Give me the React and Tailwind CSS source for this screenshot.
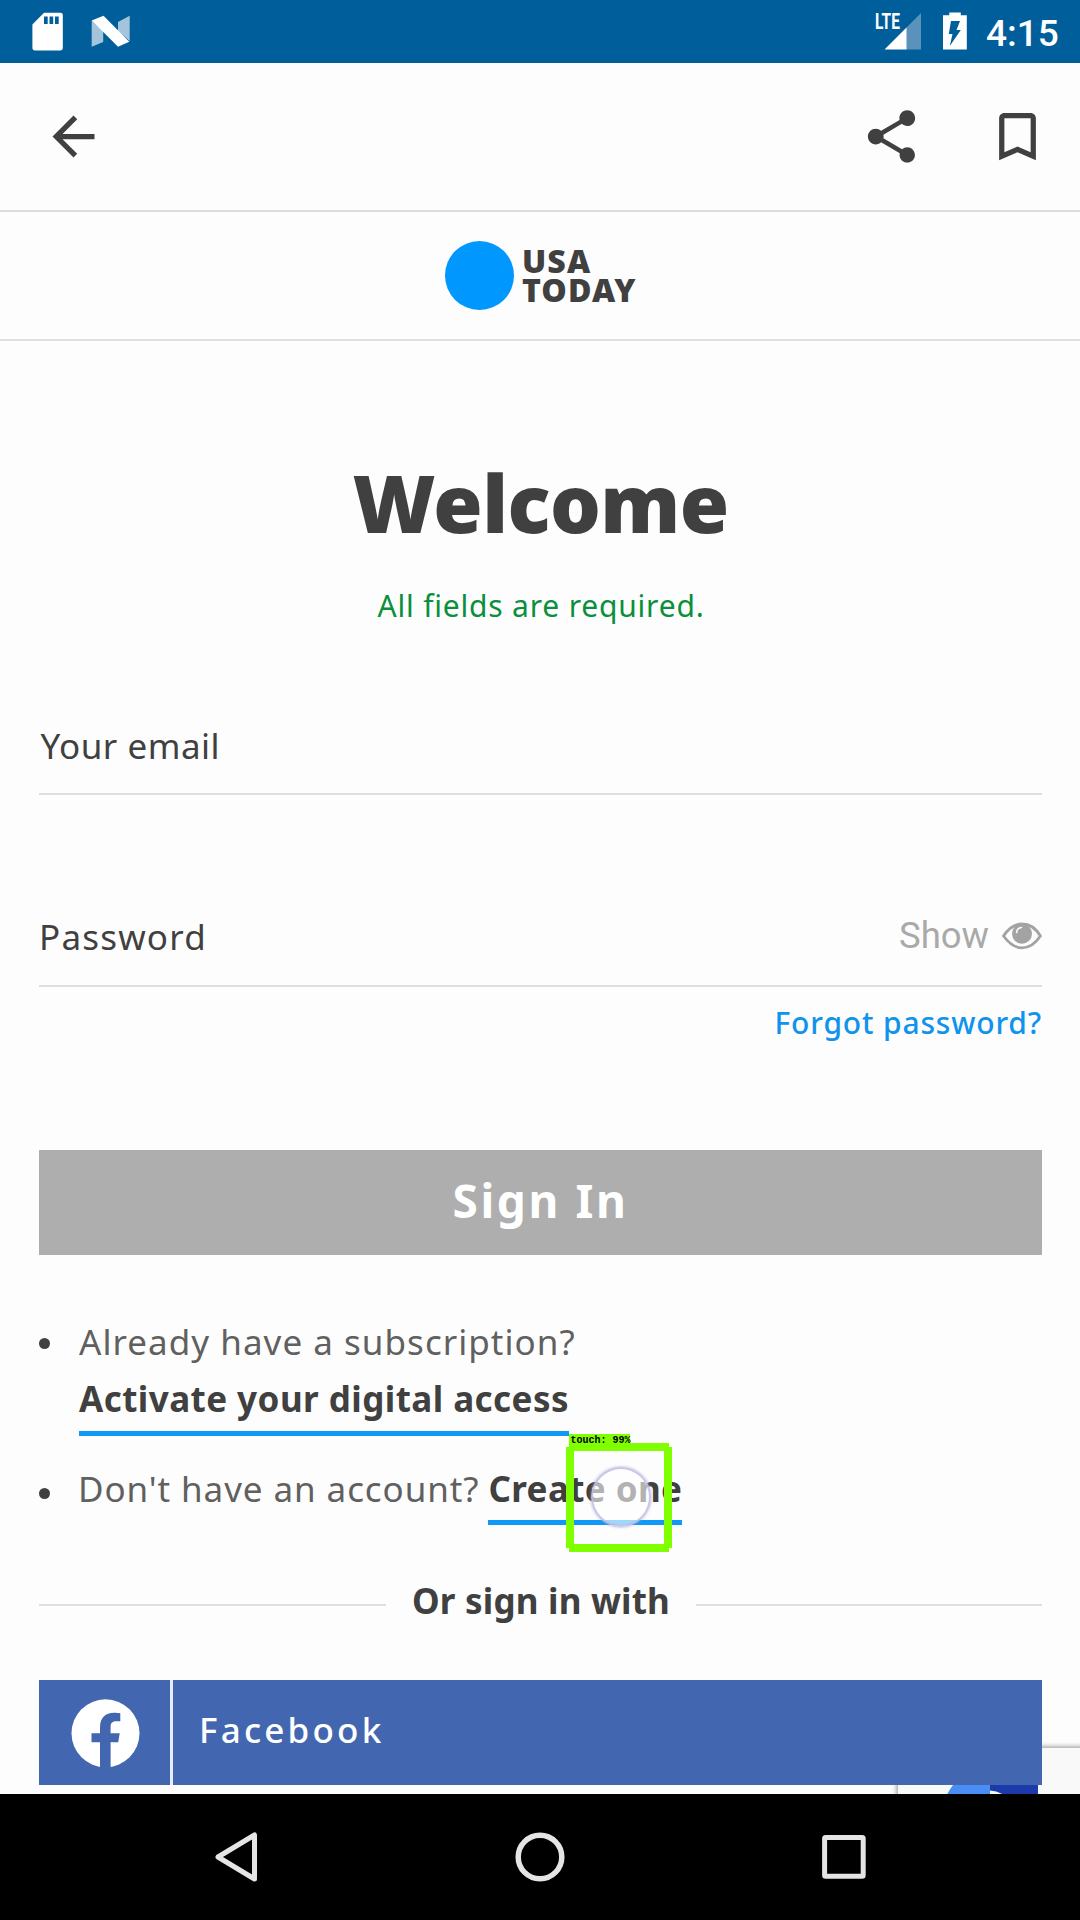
function StatusBar() {
  return (
    <div className="flex h-[63px] items-start bg-[#005e9b]">
      <svg className="ml-[32px] mt-[12px] h-[39px] w-[32px]" viewBox="0 0 32 39">
        <path fill="#fff" d="M12 .7H28.5A2.3 2.3 0 0 1 30.8 3V36A2.3 2.3 0 0 1 28.5 38.4H2.7A2.3 2.3 0 0 1 .4 36V12.5Z" />
        <path fill="#005e9b" d="M12 4.5h3.7v7.5H12zM17.5 4.5h3.7v7.5h-3.7zM23 4.5h3.7v7.5H23z" />
      </svg>
      <svg className="ml-[27px] mt-[15px] h-[33px] w-[40px]" viewBox="0 0 40 33">
        <path fill="#a3c5dc" d="M.7 5.5L12.2 16V27L.7 31.8ZM27 7L38.7.8V26L27 16Z" />
        <path fill="#fff" d="M.7 5.5L12.5.7L38.3 26.8L27 31.8Z" />
      </svg>
      <div className="relative ml-auto mt-[12px] h-[38px] w-[46px]">
        <svg className="h-[38px] w-[46px]" viewBox="0 0 46 38">
          <path fill="#5a92bb" d="M46 1V37.5H31V16Z" />
          <path fill="#fff" d="M31.5 15.5V37.5H9.5Z" />
        </svg>
        <span className="absolute left-0 -top-px origin-left scale-x-[0.7] font-['Roboto',sans-serif] text-[22px] leading-[22px] font-bold text-white">
          LTE
        </span>
      </div>
      <svg className="ml-[22px] mt-[12px] h-[38px] w-[24px]" viewBox="0 0 24 38">
        <path fill="#fff" d="M6.3.5H17.8V3.2H23.8V37.5H0V3.2H6.3Z" />
        <path fill="#005e9b" d="M8 9H17L13.5 18H17.8L6.8 34L9.5 22H5.8Z" />
      </svg>
      <span className="mt-[12px] ml-[19px] w-[94px] font-['Roboto',sans-serif] text-[37px] leading-[44px] font-medium text-white">
        4:15
      </span>
    </div>
  );
}

function Toolbar() {
  return (
    <div className="flex h-[149px] items-start border-b-2 border-[#dcdcdc] pt-[41.5px] text-[#404040]">
      <svg className="ml-[42px] h-[63px] w-[63px]" viewBox="0 0 24 24" fill="currentColor">
        <path d="M20 11H7.83l5.59-5.59L12 4l-8 8 8 8 1.41-1.41L7.83 13H20v-2z" />
      </svg>
      <svg className="ml-auto h-[63px] w-[63px]" viewBox="0 0 24 24" fill="currentColor">
        <path d="M18 16.08c-.76 0-1.44.3-1.96.77L8.91 12.7c.05-.23.09-.46.09-.7s-.04-.47-.09-.7l7.05-4.11c.54.5 1.25.81 2.04.81 1.66 0 3-1.34 3-3s-1.34-3-3-3-3 1.34-3 3c0 .24.04.47.09.7L8.04 9.81C7.5 9.31 6.79 9 6 9c-1.66 0-3 1.34-3 3s1.34 3 3 3c.79 0 1.5-.31 2.04-.81l7.12 4.16c-.05.21-.08.43-.08.65 0 1.61 1.31 2.92 2.92 2.92s2.92-1.31 2.92-2.92-1.31-2.92-2.92-2.92z" />
      </svg>
      <svg className="mr-[31.5px] ml-[63px] h-[63px] w-[63px]" viewBox="0 0 24 24" fill="currentColor">
        <path d="M17 3H7c-1.1 0-2 .9-2 2v16l7-3 7 3V5c0-1.1-.9-2-2-2zm0 15l-5-2.18L7 18V5h10v13z" />
      </svg>
    </div>
  );
}

function Brand() {
  return (
    <div className="flex h-[129px] border-b-2 border-[#dfdfdf]">
      <div className="mt-[29px] ml-[445px] size-[69px] rounded-full bg-[#0098ff]" />
      <div className="mt-[34px] ml-[8px] text-[32px] leading-[29px] font-black tracking-[1.1px]">
        <div>USA</div>
        <div>TODAY</div>
      </div>
    </div>
  );
}

function EyeIcon() {
  return (
    <svg className="ml-[13px] h-[28px] w-[40px]" viewBox="0 0 40 28">
      <path fill="none" stroke="#a3a3a3" strokeWidth="2.8" d="M1.5 14C7 5.5 13 2 20 2S33.500 5.5 38.4 14C33.5 21.5 27 25.8 20 25.8S7 21.5 1.5 14Z" />
      <circle cx="20" cy="11.8" r="10" fill="#a3a3a3" />
      <path fill="none" stroke="#fdfdfd" strokeWidth="1.6" strokeLinecap="round" d="M14.6 10.5C14.8 7.5 16.8 5.8 19.5 5.5" />
    </svg>
  );
}

function TouchMarker() {
  return (
    <div className="absolute top-[-29px] left-[78px] h-[119px] w-[108px]">
      <div className="absolute top-[37px] left-[25px] size-[60px] rounded-full border-2 border-[#b9b9e0]/80 bg-white/60 shadow-[0_0_2px_1px_rgba(160,160,215,0.45)]" />
      <div className="absolute top-[13px] left-[3px] h-[8px] w-[100px] bg-[#80ff00]" />
      <div className="absolute top-[114px] left-[3px] h-[8px] w-[100px] bg-[#80ff00]" />
      <div className="absolute top-[17px] left-0 h-[101px] w-[8px] bg-[#80ff00]" />
      <div className="absolute top-[17px] left-[98px] h-[101px] w-[8px] bg-[#80ff00]" />
      <div className="absolute top-[4px] left-[3px] h-[11px] w-[61px] bg-[#80ff00] pl-[1px] font-['Liberation_Mono',monospace] text-[10px] leading-[13px] font-bold tracking-normal whitespace-pre text-black">
        touch: 99%
      </div>
    </div>
  );
}

export default function App() {
  return (
    <div className="flex h-[1920px] w-[1080px] flex-col overflow-hidden bg-[#fdfdfd] font-['Noto_Sans',sans-serif] text-[#404040]">
      <StatusBar />
      <Toolbar />
      <Brand />
      <main className="relative h-[1453px] overflow-hidden pr-[38px] pl-[39px]">
        <h1 className="mt-[121px] text-center text-[80px] leading-[80px] font-black tracking-[-0.6px]">Welcome</h1>
        <p className="mt-[44px] pl-px text-center text-[30px] leading-[40px] font-[450] tracking-[0.8px] text-[#0a8f3c]">All fields are required.</p>

        <div className="mt-[95px] h-[74px] border-b-2 border-[#dfdfdf] pl-[1.5px] text-[35px] leading-[50px] font-[450] tracking-[0.5px]">
          Your email
        </div>
        <div className="mt-[116px] flex h-[76px] items-start border-b-2 border-[#dfdfdf]">
          <span className="mt-px text-[35px] leading-[50px] font-[450] tracking-[1.2px]">Password</span>
          <div className="ml-auto flex items-center">
            <span className="font-['Roboto',sans-serif] text-[36.5px] leading-[50px] text-[#a9a9a9]">Show</span>
            <EyeIcon />
          </div>
        </div>
        <p className="mt-[16px] text-right text-[30px] leading-[40px] font-medium tracking-[0.83px] text-[#0f93ec]">
          Forgot password?
        </p>

        <button className="mt-[107px] block h-[105px] w-[1003px] bg-[#aeaeae] pb-[5px] text-center text-[46px] leading-[98px] font-bold tracking-[2.6px] text-white">
          Sign In
        </button>

        <ul className="mt-[58px] text-[35px] text-[#606060]">
          <li className="flex">
            <span className="mt-[25px] mr-[29px] size-[11px] rounded-full bg-[#404040]" />
            <div>
              <div className="leading-[57px] font-[450] tracking-[1.03px]">Already have a subscription?</div>
              <a className="inline-block h-[66px] border-b-[5px] border-[#0f98f5] text-[35px] leading-[57px] font-bold tracking-[0.45px] text-[#404040]">
                Activate your digital access
              </a>
            </div>
          </li>
          <li className="mt-[23px] flex">
            <span className="mt-[29px] mr-[29px] size-[11px] rounded-full bg-[#404040]" />
            <div className="flex">
              <span className="-ml-px mr-[9px] leading-[60px] font-[450] tracking-[0.91px]">Don't have an account?</span>
              <span className="relative">
                <a className="inline-block h-[66px] border-b-[5px] border-[#0f98f5] leading-[60px] font-bold tracking-[0.4px] text-[#404040]">
                  Create one
                </a>
                <TouchMarker />
              </span>
            </div>
          </li>
        </ul>

        <div className="mt-[51px] flex items-center">
          <div className="mt-[7px] h-[2px] w-[347px] bg-[#dfdfdf]" />
          <div className="flex-1 text-center text-[35px] leading-[50px] font-bold tracking-[0.2px]">Or sign in with</div>
          <div className="mt-[7px] h-[2px] w-[346px] bg-[#dfdfdf]" />
        </div>

        <button className="relative z-10 mt-[54px] flex h-[105px] w-[1003px] bg-[#4267b0] text-left text-white">
          <svg className="mt-[19px] ml-[32px] h-[69px] w-[69px]" viewBox="0 0 69 69">
            <circle cx="34.5" cy="34.3" r="34" fill="#fff" />
            <path fill="#4267b0" d="M29 69V43.2H20.5V34.3H29V28.5C29 18.5 34.5 13.7 43 13.7C45.5 13.7 47.5 13.9 49.3 14.2V22.3H45C41 22.3 39.6 24.5 39.6 28V34.3H48.7L47.2 43.2H39.6V69Z" />
          </svg>
          <span className="ml-[30px] h-full w-[3px] bg-[#e6edf8]" />
          <span className="ml-[26px] text-[35px] leading-[99px] font-medium tracking-[3.2px]">Facebook</span>
        </button>

        <div className="absolute top-[1407px] left-[898px] h-[157px] w-[260px] bg-[#f9f9f9] shadow-[0_0_5px_1px_#909090]">
          <svg className="ml-[39px] h-[120px] w-[120px]" viewBox="0 0 120 120">
            <path fill="#4a8df5" d="M5 60A62 62 0 0 1 26 27H53V60Z" />
            <path fill="#1c3aa9" d="M53 27H101V60H53Z" />
            <path fill="#f9f9f9" d="M53 42.5Q62 43 70 49V60H53Z" />
          </svg>
        </div>
      </main>

      <nav className="h-[126px] bg-black">
        <svg className="h-[126px] w-[1080px]" viewBox="0 0 1080 126" fill="none" stroke="#e5e5e5" strokeLinejoin="round">
          <path strokeWidth="5" d="M254.5 41V85L218 63Z" />
          <circle cx="540" cy="63" r="21.8" strokeWidth="5.5" />
          <rect x="824.6" y="43.6" width="38.6" height="38.6" rx="1" strokeWidth="5" />
        </svg>
      </nav>
    </div>
  );
}
